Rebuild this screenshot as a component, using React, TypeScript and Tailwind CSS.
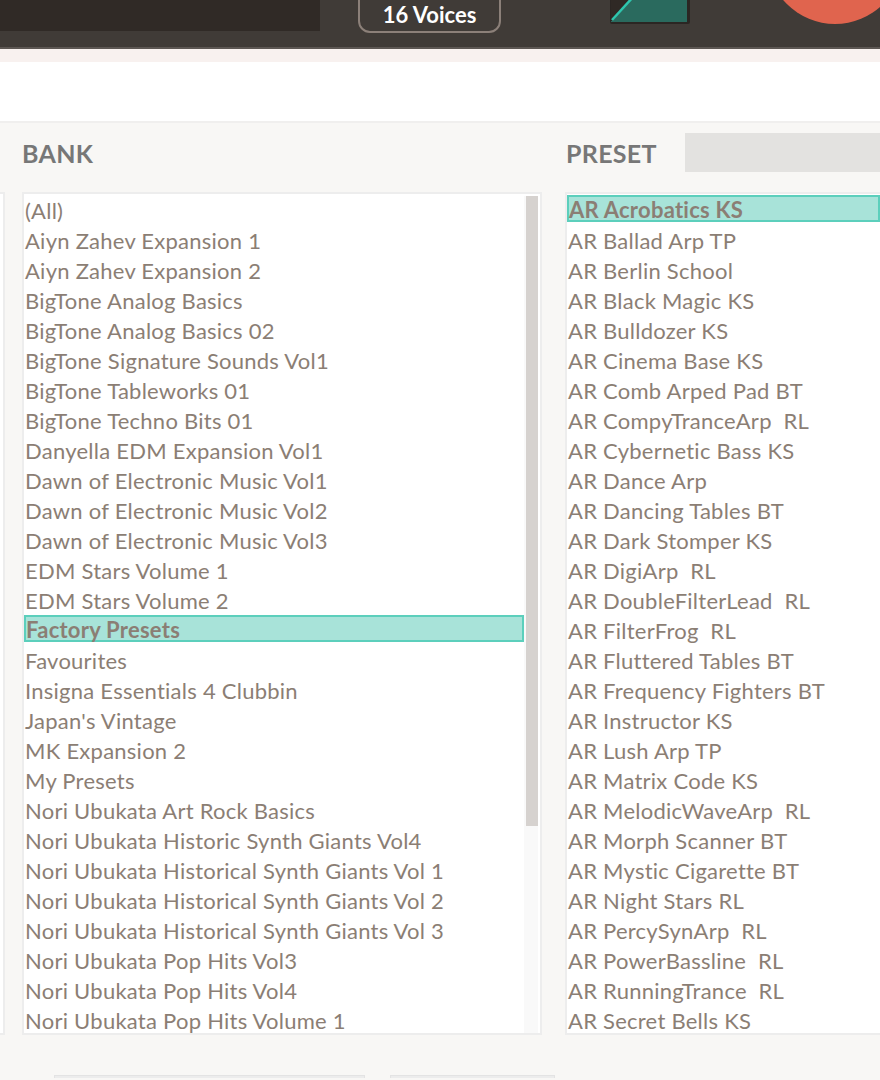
import React from "react";

const banks = [
  "(All)",
  "Aiyn Zahev Expansion 1",
  "Aiyn Zahev Expansion 2",
  "BigTone Analog Basics",
  "BigTone Analog Basics 02",
  "BigTone Signature Sounds Vol1",
  "BigTone Tableworks 01",
  "BigTone Techno Bits 01",
  "Danyella EDM Expansion Vol1",
  "Dawn of Electronic Music Vol1",
  "Dawn of Electronic Music Vol2",
  "Dawn of Electronic Music Vol3",
  "EDM Stars Volume 1",
  "EDM Stars Volume 2",
  "Factory Presets",
  "Favourites",
  "Insigna Essentials 4 Clubbin",
  "Japan's Vintage",
  "MK Expansion 2",
  "My Presets",
  "Nori Ubukata Art Rock Basics",
  "Nori Ubukata Historic Synth Giants Vol4",
  "Nori Ubukata Historical Synth Giants Vol 1",
  "Nori Ubukata Historical Synth Giants Vol 2",
  "Nori Ubukata Historical Synth Giants Vol 3",
  "Nori Ubukata Pop Hits Vol3",
  "Nori Ubukata Pop Hits Vol4",
  "Nori Ubukata Pop Hits Volume 1",
];

const presets = [
  "AR Acrobatics KS",
  "AR Ballad Arp TP",
  "AR Berlin School",
  "AR Black Magic KS",
  "AR Bulldozer KS",
  "AR Cinema Base KS",
  "AR Comb Arped Pad BT",
  "AR CompyTranceArp  RL",
  "AR Cybernetic Bass KS",
  "AR Dance Arp",
  "AR Dancing Tables BT",
  "AR Dark Stomper KS",
  "AR DigiArp  RL",
  "AR DoubleFilterLead  RL",
  "AR FilterFrog  RL",
  "AR Fluttered Tables BT",
  "AR Frequency Fighters BT",
  "AR Instructor KS",
  "AR Lush Arp TP",
  "AR Matrix Code KS",
  "AR MelodicWaveArp  RL",
  "AR Morph Scanner BT",
  "AR Mystic Cigarette BT",
  "AR Night Stars RL",
  "AR PercySynArp  RL",
  "AR PowerBassline  RL",
  "AR RunningTrance  RL",
  "AR Secret Bells KS",
];

function Row({ label, selected }: { label: string; selected?: boolean }) {
  return (
    <div className="h-[30px]">
      <div
        className={
          selected
            ? "flex h-[27px] items-center whitespace-pre border-2 border-[#5ccfbc] bg-[#a8e3d9] pt-[1px] font-bold"
            : "flex h-[27px] items-center whitespace-pre pl-[1px] pt-[3px]"
        }
      >
        {label}
      </div>
    </div>
  );
}

export default function App() {
  return (
    <div
      className="h-[1080px] w-[880px] overflow-hidden bg-[#f8f7f5] text-[22px] tracking-[0.25px] text-[#8b7e74]"
      style={{ fontFamily: "Lato, 'Open Sans', sans-serif" }}
    >
      {/* top bar */}
      <div className="relative h-[49px] overflow-hidden border-b-2 border-[#5d5753] bg-[#403b37]">
        <div className="absolute left-0 top-0 h-[31px] w-[320px] bg-[#302a26]" />
        <div className="absolute left-[358px] top-[-12px] flex h-[45px] w-[143px] items-end justify-center rounded-[12px] border-2 border-[#8c8079] pb-[0px] text-[22px] font-bold tracking-normal text-white">
          16 Voices
        </div>
        <div className="absolute left-[610px] top-[-4px] h-[28px] w-[80px] overflow-hidden rounded-[2px] bg-[#2b2623]">
          <svg width="80" height="28" viewBox="0 0 80 28">
            <rect x="1" y="0" width="76" height="26" fill="#2a6a5e" />
            <polygon points="1,0 24,0 2,25 1,25" fill="#2f2925" />
            <line x1="2" y1="24" x2="24" y2="0" stroke="#2ec6ae" strokeWidth="2.5" />
          </svg>
        </div>
        <div className="absolute left-[767px] top-[-112px] h-[136px] w-[136px] rounded-full bg-[#e0644e]" />
      </div>

      <div className="h-[13px] bg-[#f8f1ef]" />
      <div className="h-[61px] border-b-2 border-[#f0efee] bg-white" />

      {/* headers */}
      <div className="flex h-[60px] items-center text-[25px] font-bold tracking-[0.3px] text-[#777777]">
        <div className="w-[566px] pl-[22px] pt-[2px]">BANK</div>
        <div className="w-[119px] pt-[2px]">PRESET</div>
        <div className="mb-[2px] h-[39px] flex-1 bg-[#e3e2e0]" />
      </div>

      {/* lists */}
      <div className="flex h-[860px] pt-[9px]">
        <div className="h-[843px] w-[5px] border-2 border-l-0 border-[#ededed] bg-white" />
        <div className="ml-[17px] flex h-[843px] w-[520px] border-2 border-[#ededed] bg-white">
          <div className="flex-1 overflow-hidden pt-[1px]">
            {banks.map((b) => (
              <Row key={b} label={b} selected={b === "Factory Presets"} />
            ))}
          </div>
          <div className="mr-[2px] mt-[2px] w-[14px] bg-[#f9f9f9] pl-[2px]">
            <div className="h-[630px] w-[12px] bg-[#d6d2cf]" />
          </div>
        </div>
        <div className="ml-[23px] h-[843px] flex-1 border-2 border-r-0 border-[#ededed] bg-white pt-[1px]">
          {presets.map((p, i) => (
            <Row key={p} label={p} selected={i === 0} />
          ))}
        </div>
      </div>

      {/* bottom */}
      <div className="flex h-[35px] items-end">
        <div className="ml-[54px] h-[3px] w-[311px] border-x border-t border-[#e3e3e3] bg-[#ececec]" />
        <div className="ml-[25px] h-[3px] w-[165px] border-x border-t border-[#e3e3e3] bg-[#ececec]" />
      </div>
    </div>
  );
}
